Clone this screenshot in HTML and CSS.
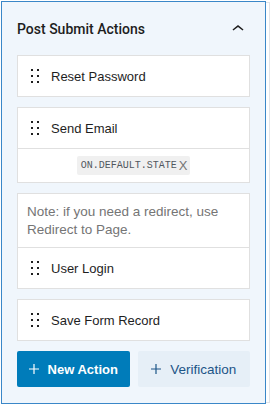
FILE: index.html
```html
<!DOCTYPE html>
<html>
<head>
  <meta charset="utf-8" />
  <title>Post Submit Actions</title>
  <link rel="stylesheet" href="styles.css">
</head>
<body>

<div class="panel">

  <div class="panel-head">
    <h2>Post Submit Actions</h2>
    <svg class="chevron" width="24" height="24" viewBox="0 0 24 24"><path d="M6.5 12.4L12 8l5.5 4.4-.9 1.2L12 10l-4.6 3.6-.9-1.2z"/></svg>
  </div>

  <div class="actions">

    <div class="card">
      <div class="row">
        <svg class="handle" width="24" height="24" viewBox="0 0 24 24"><path d="M8 7h2V5H8v2zm0 6h2v-2H8v2zm0 6h2v-2H8v2zm6-14v2h2V5h-2zm0 8h2v-2h-2v2zm0 6h2v-2h-2v2z"/></svg>
        Reset Password
      </div>
    </div>

    <div class="card">
      <div class="row">
        <svg class="handle" width="24" height="24" viewBox="0 0 24 24"><path d="M8 7h2V5H8v2zm0 6h2v-2H8v2zm0 6h2v-2H8v2zm6-14v2h2V5h-2zm0 8h2v-2h-2v2zm0 6h2v-2h-2v2z"/></svg>
        Send Email
      </div>
      <div class="states">
        <span class="badge">ON.DEFAULT.STATE <span class="remove">X</span></span>
      </div>
    </div>

    <div class="card">
      <div class="note">Note: if you need a redirect, use Redirect to Page.</div>
      <div class="row">
        <svg class="handle" width="24" height="24" viewBox="0 0 24 24"><path d="M8 7h2V5H8v2zm0 6h2v-2H8v2zm0 6h2v-2H8v2zm6-14v2h2V5h-2zm0 8h2v-2h-2v2zm0 6h2v-2h-2v2z"/></svg>
        User Login
      </div>
    </div>

    <div class="card">
      <div class="row">
        <svg class="handle" width="24" height="24" viewBox="0 0 24 24"><path d="M8 7h2V5H8v2zm0 6h2v-2H8v2zm0 6h2v-2H8v2zm6-14v2h2V5h-2zm0 8h2v-2h-2v2zm0 6h2v-2h-2v2z"/></svg>
        Save Form Record
      </div>
    </div>

  </div>

  <div class="buttons">
    <button class="btn primary"><svg class="plus" width="10" height="10" viewBox="0 0 10 10"><path d="M4.4 0h1.2v4.4H10v1.2H5.6V10H4.4V5.6H0V4.4h4.4z"/></svg>New Action</button>
    <button class="btn secondary"><svg class="plus" width="10" height="10" viewBox="0 0 10 10"><path d="M4.4 0h1.2v4.4H10v1.2H5.6V10H4.4V5.6H0V4.4h4.4z"/></svg>Verification</button>
  </div>

</div>

</body>
</html>
```

FILE: styles.css
```css
body {
    margin: 0;
    padding: 1px 0 0 1px;
    font-family: "Liberation Sans", Arial, sans-serif;
    font-size: 13px;
    color: #1e1e1e;
    background: #fff;
}
.panel {
    width: 233px;
    padding: 0 15px 16px 15px;
    border: 1px solid #3a87c8;
    background-color: #f0f6fc;
    box-shadow: 5px 0 0 -2px #fff, 5px 0 0 -1px #e2e4e7;
}
.panel-head {
    display: flex;
    align-items: center;
    justify-content: space-between;
    height: 53px;
}
.panel-head h2 {
    margin: 0;
    font-family: Roboto, "Liberation Sans", sans-serif;
    font-size: 14px;
    font-weight: 500;
    color: #1e1e1e;
}
.chevron {
    fill: #1e1e1e;
    margin-top: 1px;
}
.actions {
    display: flex;
    flex-direction: column;
    gap: 10px;
}
.card {
    background: #fff;
    border: 1px solid #e0e0e0;
}
.row {
    display: flex;
    align-items: center;
    gap: 4px;
    height: 40px;
    padding-left: 5px;
    font-size: 13px;
}
.card > div + div {
    border-top: 1px solid #e0e0e0;
}
.handle {
    fill: #1e1e1e;
    flex: none;
}
.states {
    display: flex;
    align-items: center;
    justify-content: center;
    height: 33px;
}
.badge {
    display: inline-flex;
    align-items: center;
    gap: 2px;
    padding: 3px 3px 3px 4px;
    border-radius: 2px;
    background: #f0f0f0;
    color: #50575e;
    font-family: "Liberation Mono", "DejaVu Sans Mono", monospace;
    font-size: 10px;
}
.badge .remove {
    font-family: "Liberation Sans", Arial, sans-serif;
    font-size: 13px;
    line-height: 13px;
    color: #757575;
}
.note {
    padding: 9px 10px 8px 9px;
    font-size: 13.5px;
    line-height: 18px;
    color: #757575;
}
.buttons {
    display: flex;
    gap: 8px;
    margin-top: 10px;
}
.btn {
    display: flex;
    align-items: center;
    justify-content: center;
    flex: 1;
    height: 36px;
    border: 0;
    border-radius: 2px;
    font-family: "Liberation Sans", Arial, sans-serif;
    font-size: 13px;
    padding: 0;
}
.btn .plus {
    fill: currentColor;
    margin-right: 9px;
}
.primary {
    background: #007cba;
    color: #fff;
    font-weight: bold;
}
.secondary {
    background: #e6eff7;
    color: #1c5587;
    font-size: 13.5px;
}
```
